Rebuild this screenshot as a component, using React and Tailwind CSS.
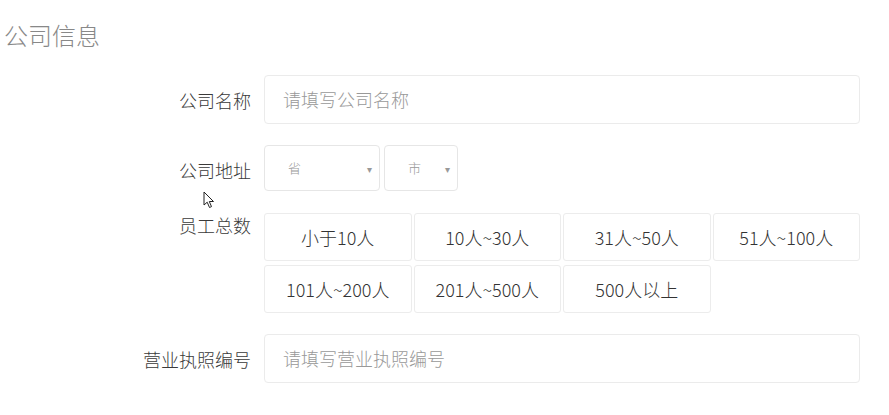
import React from "react";

const sizes = [
  "小于10人",
  "10人~30人",
  "31人~50人",
  "51人~100人",
  "101人~200人",
  "201人~500人",
  "500人以上",
];

function Label({ children, className = "" }) {
  return (
    <div
      className={
        "w-[264px] shrink-0 pr-[13px] text-right text-[18px] font-light leading-[24px] text-[#3a3a3a] " +
        className
      }
    >
      {children}
    </div>
  );
}

function Select({ text, w }) {
  return (
    <div
      className={
        "flex h-[46px] items-center justify-between rounded-[4px] border border-[#e6e6e6] bg-white pl-[23px] pr-[7px] " +
        w
      }
    >
      <span className="text-[13px] font-light text-[#999]">{text}</span>
      <span className="text-[10px] text-[#999]">▾</span>
    </div>
  );
}

export default function App() {
  return (
    <div
      className="relative h-[415px] w-[889px] bg-white"
      style={{ fontFamily: '"Noto Sans CJK SC", "Noto Sans", sans-serif' }}
    >
      <div className="flex h-[70px] items-center pl-[4px] text-[24px] font-light text-[#888]">
        公司信息
      </div>

      <div className="mt-[5px] flex items-center">
        <Label>公司名称</Label>
        <div className="flex h-[49px] w-[596px] items-center rounded-[4px] border border-[#ebebeb] pl-[18px] text-[18px] font-light text-[#999]">
          请填写公司名称
        </div>
      </div>

      <div className="mt-[21px] flex items-start">
        <Label className="mt-[13px]">公司地址</Label>
        <div className="flex gap-[4px]">
          <Select text="省" w="w-[116px]" />
          <Select text="市" w="w-[74px]" />
        </div>
      </div>

      <div className="mt-[22px] flex items-start">
        <Label>员工总数</Label>
        <div className="grid w-[596px] grid-cols-4 gap-x-[2px] gap-y-[4px]">
          {sizes.map((s) => (
            <div
              key={s}
              className="flex h-[48px] items-center justify-center rounded-[3px] border border-[#ececec] text-[18px] font-light text-[#333]"
            >
              {s}
            </div>
          ))}
        </div>
      </div>

      <div className="mt-[21px] flex items-center">
        <Label>营业执照编号</Label>
        <div className="flex h-[49px] w-[596px] items-center rounded-[4px] border border-[#ebebeb] pl-[18px] text-[18px] font-light text-[#999]">
          请填写营业执照编号
        </div>
      </div>

      <svg
        className="absolute left-[203px] top-[191px]"
        width="14"
        height="20"
        viewBox="0 0 14 20"
      >
        <path
          d="M1 1 L1 14 L4.2 11.2 L6.5 16.5 L8.5 15.6 L6.3 10.5 L10.5 10.5 Z"
          fill="white"
          stroke="#222"
          strokeWidth="1"
          strokeLinejoin="round"
        />
      </svg>
    </div>
  );
}
